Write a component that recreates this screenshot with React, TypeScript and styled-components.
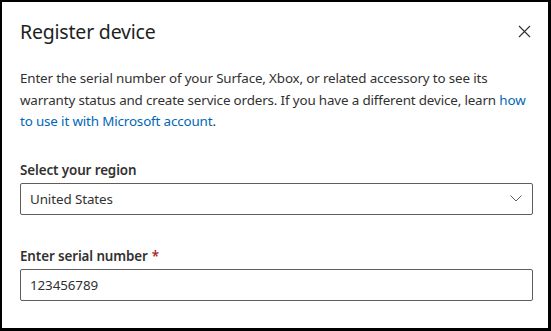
import React from "react";
import styled, { createGlobalStyle } from "styled-components";

const GlobalStyle = createGlobalStyle`
  html, body {
    margin: 0;
    padding: 0;
    background: #000;
  }
  body {
    font-family: "Noto Sans", "Open Sans", sans-serif;
  }
`;

const DialogFrame = styled.div`
  box-sizing: border-box;
  width: 551px;
  height: 331px;
  border-style: solid;
  border-color: #000;
  border-width: 2px 3px 3px 2px;
  background: #fff;
  padding: 0 16px 0 18px;
  display: flex;
  flex-direction: column;
  color: #323130;
`;

const Header = styled.div`
  display: flex;
  align-items: center;
  justify-content: space-between;
  height: 58px;
`;

const Title = styled.h1`
  margin: 0;
  font-size: 19.5px;
  font-weight: 400;
  letter-spacing: -0.2px;
  color: #201f1e;
`;

const CloseButton = styled.button`
  border: none;
  background: transparent;
  padding: 0;
  width: 28px;
  height: 28px;
  display: flex;
  align-items: center;
  justify-content: center;
  margin-right: -6px;
  cursor: pointer;
`;

const Intro = styled.p`
  margin: 8px 0 0;
  font-size: 13.4px;
  line-height: 21.5px;
  letter-spacing: -0.15px;
  color: #323130;
`;

const Link = styled.a`
  color: #0067b8;
  text-decoration: none;
`;

const Field = styled.div<{ $top: number }>`
  display: flex;
  flex-direction: column;
  margin-top: ${(p) => p.$top}px;
`;

const Label = styled.label`
  font-size: 13.4px;
  font-weight: 600;
  line-height: 20px;
  letter-spacing: -0.1px;
  color: #323130;
  margin-bottom: 3px;
`;

const Required = styled.span`
  color: #a4262c;
  margin-left: 4px;
`;

const Box = styled.div`
  box-sizing: border-box;
  width: 513px;
  height: 32px;
  border: 1px solid #605e5c;
  border-radius: 2px;
  display: flex;
  align-items: center;
  justify-content: space-between;
  padding: 0 10px 0 9px;
  font-size: 13.4px;
  letter-spacing: -0.1px;
  color: #323130;
`;

const App = () => {
  return (
    <>
      <GlobalStyle />
      <DialogFrame>
        <Header>
          <Title>Register device</Title>
          <CloseButton aria-label="Close">
            <svg width="13" height="13" viewBox="0 0 13 13">
              <path d="M1 1L12 12M12 1L1 12" stroke="#323130" strokeWidth="1.1" />
            </svg>
          </CloseButton>
        </Header>
        <Intro>
          Enter the serial number of your Surface, Xbox, or related accessory to see its
          warranty status and create service orders. If you have a different device, learn{" "}
          <Link href="#">how to use it with Microsoft account</Link>.
        </Intro>
        <Field $top={27}>
          <Label>Select your region</Label>
          <Box>
            <span>United States</span>
            <svg width="12" height="7" viewBox="0 0 12 7">
              <path d="M0.5 0.5L6 6L11.5 0.5" stroke="#605e5c" strokeWidth="1" fill="none" />
            </svg>
          </Box>
        </Field>
        <Field $top={31}>
          <Label>
            Enter serial number<Required>*</Required>
          </Label>
          <Box>
            <span>123456789</span>
          </Box>
        </Field>
      </DialogFrame>
    </>
  );
};

export default App;
